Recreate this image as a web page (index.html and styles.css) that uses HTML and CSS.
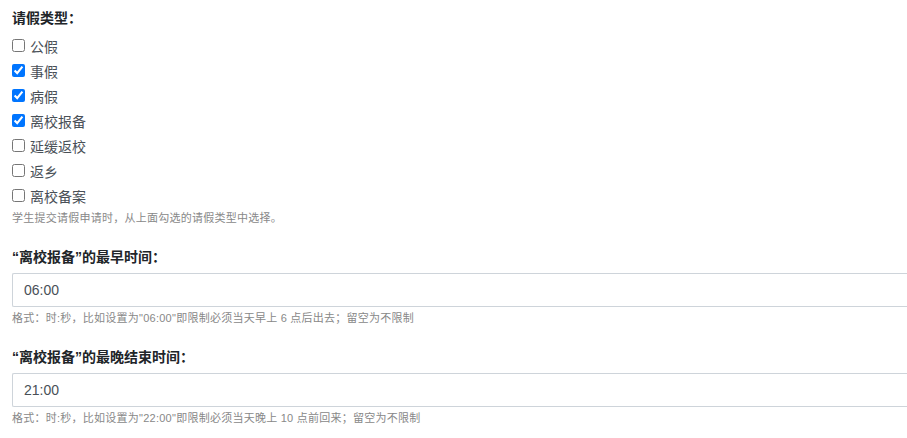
FILE: index.html
```html
<!DOCTYPE html>
<html lang="zh">
<head>
<meta charset="utf-8">
<link rel="stylesheet" href="styles.css">
</head>
<body>
<div class="form">
  <div class="group">
    <div class="label">请假类型：</div>
    <div class="checks">
      <label class="check"><input type="checkbox"><span>公假</span></label>
      <label class="check"><input type="checkbox" checked><span>事假</span></label>
      <label class="check"><input type="checkbox" checked><span>病假</span></label>
      <label class="check"><input type="checkbox" checked><span>离校报备</span></label>
      <label class="check"><input type="checkbox"><span>延缓返校</span></label>
      <label class="check"><input type="checkbox"><span>返乡</span></label>
      <label class="check"><input type="checkbox"><span>离校备案</span></label>
    </div>
    <div class="help">学生提交请假申请时，从上面勾选的请假类型中选择。</div>
  </div>
  <div class="group">
    <div class="label">“离校报备”的最早时间：</div>
    <input class="field" type="text" value="06:00">
    <div class="help">格式：时:秒，比如设置为"06:00"即限制必须当天早上 6 点后出去；留空为不限制</div>
  </div>
  <div class="group">
    <div class="label">“离校报备”的最晚结束时间：</div>
    <input class="field" type="text" value="21:00">
    <div class="help">格式：时:秒，比如设置为"22:00"即限制必须当天晚上 10 点前回来；留空为不限制</div>
  </div>
</div>
</body>
</html>
```

FILE: styles.css
```css
html, body {
  margin: 0;
  padding: 0;
  background: #fff;
}
body {
  font-family: "Liberation Sans", "Noto Sans CJK SC", sans-serif;
  font-size: 14px;
  color: #333;
}
.form {
  padding: 8px 0 0 12px;
  display: flex;
  flex-direction: column;
  gap: 21px;
}
.group {
  display: flex;
  flex-direction: column;
}
.label {
  font-weight: bold;
  line-height: 20px;
  color: #212529;
  margin-bottom: 6px;
}
.checks {
  display: flex;
  flex-direction: column;
  margin-top: -1px;
}
.check {
  display: flex;
  align-items: center;
  height: 25px;
  color: #495057;
  gap: 5px;
}
.check input {
  margin: 0;
  width: 13px;
  height: 13px;
}
.help {
  font-size: 11px;
  line-height: 16px;
  letter-spacing: 0.25px;
  color: #888;
  margin-top: 3px;
}
.checks + .help {
  margin-top: 2px;
}
.field {
  box-sizing: border-box;
  width: 920px;
  height: 34px;
  margin: 0;
  padding: 0 11px;
  border: 1px solid #ced4da;
  border-right: none;
  border-radius: 2px 0 0 2px;
  font-family: "Liberation Sans", "Noto Sans CJK SC", sans-serif;
  font-size: 14px;
  color: #495057;
  outline: none;
}
```
